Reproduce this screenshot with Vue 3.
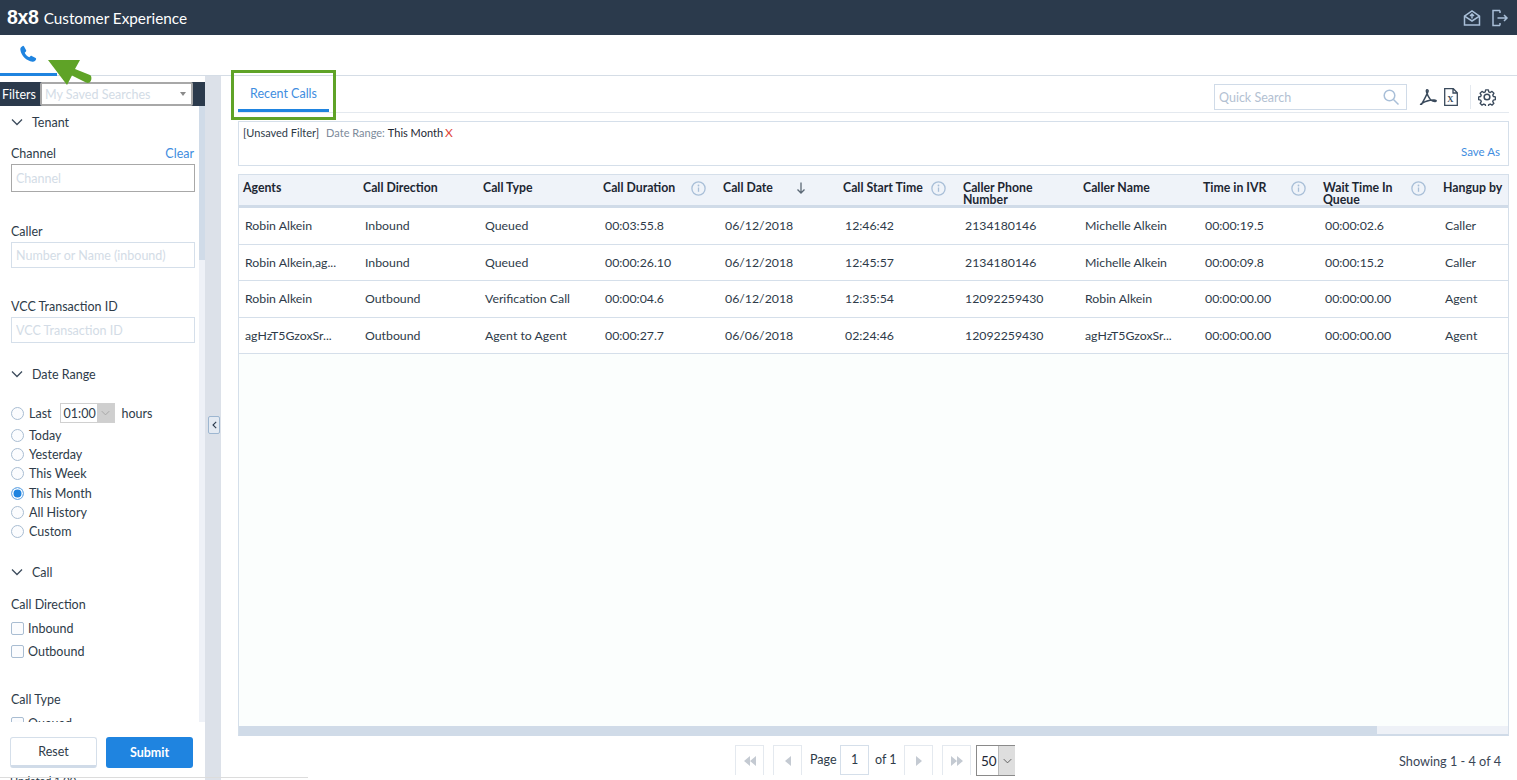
<template>
  <div class="page">
    <header class="topbar">
      <div class="brand"><span class="logo">8x8</span><span class="brand-name">Customer Experience</span></div>
      <div class="top-icons">
        <svg width="18" height="18" viewBox="0 0 18 18" fill="none" stroke="#a9bfd8" stroke-width="1.5">
          <path d="M1.500 7.200 9 2l7.500 5.200V16h-15z" />
          <path d="M1.500 7.200 9 12l7.500-4.800" />
          <path d="M9 9.500V5.200M7 7l2-2 2 2" />
        </svg>
        <svg width="18" height="18" viewBox="0 0 18 18" fill="none" stroke="#a9bfd8" stroke-width="1.5">
          <path d="M9 1.500H2v15h7M9 1.500V4M9 16.500V14" />
          <path d="M6.500 9H16M13 6l3 3-3 3" />
        </svg>
      </div>
    </header>

    <nav class="modulebar">
      <div class="module-tab">
        <svg width="18" height="18" viewBox="0 0 24 24" fill="#1f84e0">
          <path d="M6.600 1.800 9.500 7c.3.500.2 1.100-.2 1.500L7.600 10.300c1.300 2.600 3.500 4.800 6.100 6.100l1.800-1.700c.4-.4 1-.5 1.500-.2l5.200 2.900c.6.300.8 1 .6 1.600-.7 2.200-2.600 3.500-4.800 3.200C10 21.100 2.900 14 1.800 6.200 1.500 4 2.800 2.100 5 1.200c.6-.2 1.300 0 1.600.6z" />
        </svg>
      </div>
    </nav>

    <div class="body">
      <aside class="sidebar">
        <div class="filter-col">
          <div class="filters-head">
            <span class="filters-label">Filters</span>
            <div class="saved-select"><span>My Saved Searches</span><i class="caret"></i></div>
          </div>
          <div class="filter-wrap">
            <div class="filter-scroll">
              <div class="section-title tenant"><svg class="chev" viewBox="0 0 12 8"><path d="M1 1.500 6 6.500l5-5" /></svg>Tenant</div>
              <div class="field-label channel"><span>Channel</span><a>Clear</a></div>
              <input class="text-input dark" placeholder="Channel" />
              <div class="field-label caller"><span>Caller</span></div>
              <input class="text-input" placeholder="Number or Name (inbound)" />
              <div class="field-label vcc"><span>VCC Transaction ID</span></div>
              <input class="text-input" placeholder="VCC Transaction ID" />
              <div class="section-title date"><svg class="chev" viewBox="0 0 12 8"><path d="M1 1.500 6 6.500l5-5" /></svg>Date Range</div>
              <div class="radio-row last">
                <i class="radio"></i><span>Last</span>
                <div class="hours"><span>01:00</span><b><svg width="9" height="6" viewBox="0 0 12 8"><path d="M1 1.500 6 6.500l5-5" fill="none" stroke="#a8a8a8" stroke-width="1.300" /></svg></b></div>
                <span class="hours-label">hours</span>
              </div>
              <div v-for="r in ranges" :key="r" class="radio-row">
                <i class="radio" :class="{ on: r === 'This Month' }"></i><span>{{ r }}</span>
              </div>
              <div class="section-title call"><svg class="chev" viewBox="0 0 12 8"><path d="M1 1.500 6 6.500l5-5" /></svg>Call</div>
              <div class="field-label direction"><span>Call Direction</span></div>
              <div class="check-row"><i class="check"></i><span>Inbound</span></div>
              <div class="check-row"><i class="check"></i><span>Outbound</span></div>
              <div class="field-label calltype"><span>Call Type</span></div>
              <div class="check-row"><i class="check"></i><span>Queued</span></div>
            </div>
            <div class="side-track"><div class="side-thumb"></div></div>
          </div>
          <div class="filter-actions">
            <button class="btn reset">Reset</button>
            <button class="btn submit">Submit</button>
          </div>
          <div class="clipped">Updated 1.00</div>
        </div>
        <div class="splitter">
          <div class="collapse"><svg width="5" height="8" viewBox="0 0 5 8"><path d="M4.200.8 1 4l3.200 3.200" fill="none" stroke="#2c3b4d" stroke-width="1.100" /></svg></div>
        </div>
      </aside>

      <main class="main">
        <div class="tabs-row">
          <div class="tab">Recent Calls</div>
          <div class="tools">
            <div class="search">
              <span>Quick Search</span>
              <svg width="16" height="16" viewBox="0 0 16 16" fill="none" stroke="#a9bfd8" stroke-width="1.500"><circle cx="6.500" cy="6.500" r="5.300" /><path d="m10.500 10.500 5 5" /></svg>
            </div>
            <svg class="pdf" width="18" height="16" viewBox="0 0 18 16" fill="none" stroke="#3a4a5c" stroke-width="1.500">
              <path d="M8 .8c-1 0-.9 2 1 6 1.200 2.500 3 4.800 4.800 5.300 2 .6 3.500.4 3.400-.4-.1-.9-3-1.100-6.200-.4-3.500.8-7.500 2.500-9 3.700-.8.700-.3 1.100.4.500C4 13 8.600 4 9 2.500 9.300 1.300 8.800.8 8 .8z" />
            </svg>
            <svg class="xls" width="14" height="18" viewBox="0 0 14 18" fill="none" stroke="#3a4a5c" stroke-width="1.300">
              <path d="M.7.700h8.600l4 4v12.600H.7zM9 .7v4.300h4.300" />
              <text x="3.300" y="14" font-size="8.500" font-weight="700" fill="#3a4a5c" stroke="none" font-family="Liberation Serif, serif">X</text>
            </svg>
            <i class="tool-sep"></i>
            <svg class="gear" width="18" height="18" viewBox="0 0 24 24" fill="none" stroke="#3a4a5c" stroke-width="2" stroke-linejoin="round">
              <path d="M10 1.500h4l.6 3 2.200.9 2.600-1.700 2.800 2.800-1.700 2.600.9 2.200 3 .6v4l-3 .6-.9 2.200 1.700 2.600-2.800 2.800-2.600-1.700-2.200.9-.6 3h-4l-.6-3-2.200-.9-2.600 1.700-2.800-2.800 1.700-2.600-.9-2.200-3-.6v-4l3-.6.9-2.200L1.800 6.500l2.800-2.800 2.600 1.700 2.200-.9z" transform="translate(1.200 1.200) scale(.9)" />
              <circle cx="12" cy="12" r="3.800" />
            </svg>
          </div>
        </div>

        <section class="filter-summary">
          <div class="summary-line">
            <span class="unsaved">[Unsaved Filter]</span>
            <span class="range-key">Date Range:</span>
            <span class="range-val">This Month</span>
            <span class="range-x">X</span>
          </div>
          <a class="save-as">Save As</a>
        </section>

        <section class="grid">
          <div class="grid-inner">
            <div class="grid-head">
              <div v-for="c in columns" :key="c.label" class="th">
                <span class="th-label">{{ c.label }}</span>
                <svg v-if="c.info" class="info" width="15" height="15" viewBox="0 0 15 15" fill="none">
                  <circle cx="7.500" cy="7.500" r="6.600" stroke="#a9bfd8" stroke-width="1.300" />
                  <path d="M7.500 6.500v4.300" stroke="#a9bfd8" stroke-width="1.300" />
                  <circle cx="7.500" cy="4.500" r=".9" fill="#a9bfd8" />
                </svg>
                <svg v-if="c.sort" class="sort" width="10" height="12" viewBox="0 0 10 12" fill="none" stroke="#5b6875" stroke-width="1.300"><path d="M5 .5v10.500M1.500 7.500 5 11l3.500-3.500" /></svg>
              </div>
            </div>
            <div v-for="(row, i) in rows" :key="i" class="tr">
              <div v-for="(v, j) in row" :key="j" class="td">{{ v }}</div>
            </div>
            <div class="grid-fill"></div>
          </div>
          <div class="hscroll"><div class="hthumb"></div></div>
        </section>

        <footer class="pager">
          <div class="pager-center">
            <button class="pg"><svg width="12" height="10" viewBox="0 0 12 10" fill="#c4cad2"><path d="M6 0v10L0 5zM12 0v10L6 5z" /></svg></button>
            <button class="pg second"><svg width="6" height="10" viewBox="0 0 6 10" fill="#c4cad2"><path d="M6 0v10L0 5z" /></svg></button>
            <span class="pg-text">Page</span>
            <span class="pg-num">1</span>
            <span class="pg-text of">of 1</span>
            <button class="pg"><svg width="6" height="10" viewBox="0 0 6 10" fill="#c4cad2"><path d="M0 0v10l6-5z" /></svg></button>
            <button class="pg second"><svg width="12" height="10" viewBox="0 0 12 10" fill="#c4cad2"><path d="M0 0v10l6-5zM6 0v10l6-5z" /></svg></button>
            <div class="size-select"><span>50</span><b><svg width="9" height="6" viewBox="0 0 12 8"><path d="M1 1.500 6 6.500l5-5" fill="none" stroke="#555" stroke-width="1.200" /></svg></b></div>
          </div>
          <span class="showing">Showing 1 - 4 of 4</span>
        </footer>
      </main>
    </div>

    <svg class="arrow-note" width="50" height="30" viewBox="0 0 50 30">
      <path d="M0 0h32l-5 9 15 6c2 .8 2 6-.5 7.500-1 .5-2.500.5-3.500 0L24 15.500 19 25z" fill="#5fa327" />
    </svg>
    <div class="box-note"></div>
    <div class="page-edge"></div>
  </div>
</template>

<script setup>
const ranges = ['Today', 'Yesterday', 'This Week', 'This Month', 'All History', 'Custom']

const columns = [
  { label: 'Agents' },
  { label: 'Call Direction' },
  { label: 'Call Type' },
  { label: 'Call Duration', info: true },
  { label: 'Call Date', sort: true },
  { label: 'Call Start Time', info: true },
  { label: 'Caller Phone Number' },
  { label: 'Caller Name' },
  { label: 'Time in IVR', info: true },
  { label: 'Wait Time In Queue', info: true },
  { label: 'Hangup by' }
]

const rows = [
  ['Robin Alkein', 'Inbound', 'Queued', '00:03:55.8', '06/12/2018', '12:46:42', '2134180146', 'Michelle Alkein', '00:00:19.5', '00:00:02.6', 'Caller'],
  ['Robin Alkein,ag...', 'Inbound', 'Queued', '00:00:26.10', '06/12/2018', '12:45:57', '2134180146', 'Michelle Alkein', '00:00:09.8', '00:00:15.2', 'Caller'],
  ['Robin Alkein', 'Outbound', 'Verification Call', '00:00:04.6', '06/12/2018', '12:35:54', '12092259430', 'Robin Alkein', '00:00:00.00', '00:00:00.00', 'Agent'],
  ['agHzT5GzoxSr...', 'Outbound', 'Agent to Agent', '00:00:27.7', '06/06/2018', '02:24:46', '12092259430', 'agHzT5GzoxSr...', '00:00:00.00', '00:00:00.00', 'Agent']
]
</script>

<style>
html, body {
  margin: 0;
  height: 100%;
  overflow: hidden;
  background: #fff;
}
</style>

<style scoped>
.page {
  position: relative;
  width: 1517px;
  height: 780px;
  overflow: hidden;
  display: flex;
  flex-direction: column;
  font-family: Lato, "Noto Sans", sans-serif;
  font-size: 12.500px;
  color: #2e3b49;
}

.topbar {
  height: 35px;
  flex: none;
  background: #2b3a4c;
  display: flex;
  align-items: center;
  justify-content: space-between;
  padding: 0 8px 0 7px;
  color: #fff;
}
.brand { display: flex; align-items: baseline; gap: 5px; }
.logo {
  font-family: "Liberation Sans", sans-serif;
  font-size: 19.500px;
  font-weight: 700;
  letter-spacing: -0.3px;
}
.brand-name { font-size: 15.300px; }
.top-icons { display: flex; gap: 10px; align-items: center; }

.modulebar {
  height: 41px;
  flex: none;
  box-sizing: border-box;
  border-bottom: 1px solid #d5dde6;
  background: #fff;
}
.module-tab {
  width: 57px;
  height: 41px;
  box-sizing: border-box;
  border-bottom: 3px solid #1f84e0;
  padding: 10px 0 0 19px;
}

.body { flex: 1; display: flex; min-height: 0; }

.sidebar { width: 221px; flex: none; display: flex; padding-top: 6px; box-sizing: border-box; }
.filter-col { width: 205px; display: flex; flex-direction: column; position: relative; }
.filters-head {
  height: 24px;
  flex: none;
  background: #2b3a4c;
  display: flex;
  align-items: center;
  padding-left: 2px;
  color: #fff;
}
.filters-label { width: 38px; }
.saved-select {
  width: 153px;
  height: 24px;
  box-sizing: border-box;
  border: 2px solid #a8a8a8;
  border-radius: 2px;
  background: #fff;
  display: flex;
  align-items: center;
  justify-content: space-between;
  padding: 0 5px 0 3px;
  color: #d3dce6;
}
.caret {
  border-left: 3.500px solid transparent;
  border-right: 3.500px solid transparent;
  border-top: 4px solid #8a8a8a;
}

.filter-wrap { flex: 1; min-height: 0; display: flex; overflow: hidden; }
.filter-scroll { width: 199px; padding-left: 11px; box-sizing: border-box; }
.side-track { width: 6px; background: #eef1f7; }
.side-thumb { height: 154px; background: #d0dbe8; }

.section-title {
  display: flex;
  align-items: center;
  height: 16px;
  color: #2e3b49;
}
.chev { width: 12px; height: 8px; margin-right: 9px; fill: none; stroke: #3d4c5d; stroke-width: 1.300; }
.section-title.tenant { margin-top: 8px; }
.section-title.date { margin-top: 23px; }
.section-title.call { margin-top: 23px; }

.field-label {
  display: flex;
  justify-content: space-between;
  width: 183px;
  height: 16px;
  line-height: 16px;
}
.field-label a { color: #3f8de0; }
.field-label.channel { margin-top: 16px; margin-bottom: 2px; }
.field-label.caller { margin-top: 32px; margin-bottom: 2px; }
.field-label.vcc { margin-top: 31px; margin-bottom: 2px; }
.field-label.direction { margin-top: 17px; margin-bottom: 4px; }
.field-label.calltype { margin-top: 29px; margin-bottom: 4px; }

.text-input {
  display: block;
  width: 184px;
  height: 26px;
  box-sizing: border-box;
  border: 1px solid #d5dfea;
  padding: 0 4px;
  font: inherit;
  outline: none;
  background: #fff;
}
.text-input.dark { height: 28px; border-color: #a8a8a8; }
.text-input::placeholder { color: #d3dce6; opacity: 1; }

.radio-row { display: flex; align-items: center; height: 19.200px; }
.radio-row.last { height: 20px; margin-top: 21px; margin-bottom: 3px; }
.radio {
  width: 13px;
  height: 13px;
  box-sizing: border-box;
  border: 1px solid #a9bdd2;
  border-radius: 50%;
  margin-right: 5px;
  background: #fbfcfe;
  flex: none;
}
.radio.on { background: #1f84e0; box-shadow: inset 0 0 0 1.500px #fff; border-color: #7db2e6; }
.hours {
  margin-left: 8px;
  width: 55px;
  height: 20px;
  box-sizing: border-box;
  border: 1px solid #d0d0d0;
  display: flex;
  align-items: center;
  padding-left: 3px;
  justify-content: space-between;
}
.hours b {
  width: 17px;
  height: 18px;
  background: #cfcfcf;
  display: flex;
  align-items: center;
  justify-content: center;
}
.hours-label { margin-left: 7px; }

.check-row { display: flex; align-items: center; height: 23px; }
.check {
  width: 13px;
  height: 13px;
  box-sizing: border-box;
  border: 1px solid #a9bdd2;
  border-radius: 2px;
  background: #fbfcfe;
  margin-right: 4px;
}

.filter-actions {
  height: 53px;
  flex: none;
  padding: 15px 12px 0 10px;
  box-sizing: border-box;
  display: flex;
  gap: 9px;
  background: #fff;
}
.btn {
  width: 87px;
  height: 31px;
  border-radius: 3px;
  font: inherit;
  font-weight: 700;
}
.btn.reset { background: #fff; color: #2e3b49; border: 1px solid #d5dfea; border-bottom: 3px solid #d0dbe8; font-weight: 400; }
.btn.submit { background: #1f84e0; color: #fff; border: none; }
.clipped { height: 5px; padding-left: 10px; line-height: 12px; overflow: hidden; font-size: 11px; }

.splitter {
  width: 16px;
  background: #dce1e9;
  position: relative;
  margin-top: -6px;
}
.collapse {
  position: absolute;
  left: 3px;
  top: 340px;
  width: 12px;
  height: 18px;
  box-sizing: border-box;
  background: #e4eaf2;
  border: 1px solid #9db6d0;
  border-radius: 2px;
  display: flex;
  align-items: center;
  justify-content: center;
}

.main {
  width: 1271px;
  margin-left: 17px;
  flex: none;
  display: flex;
  flex-direction: column;
}

.tabs-row {
  height: 37px;
  flex: none;
  box-sizing: border-box;
  border-bottom: 1px solid #e4e9ef;
  display: flex;
  justify-content: space-between;
}
.tab {
  width: 91px;
  height: 36px;
  box-sizing: border-box;
  border-bottom: 3px solid #1f84e0;
  padding-top: 9px;
  line-height: 18px;
  text-align: center;
  color: #3f8de0;
  margin-bottom: -1px;
}
.tools { display: flex; align-items: center; padding-top: 6px; height: 30px; padding-right: 13px; }
.search {
  width: 193px;
  height: 26px;
  box-sizing: border-box;
  border: 1px solid #d0dbe8;
  display: flex;
  align-items: center;
  justify-content: space-between;
  padding: 0 7px 0 4px;
  color: #b3c1d2;
  margin-right: 12px;
}
.xls { margin-left: 7px; }
.tool-sep { width: 1px; height: 24px; background: #e4e9ef; margin: 0 7px 0 12px; }

.filter-summary {
  margin-top: 8px;
  height: 45px;
  flex: none;
  box-sizing: border-box;
  border: 1px solid #d5dfea;
  padding: 3px 8px 0 4px;
  position: relative;
  font-size: 11px;
}
.summary-line { display: flex; align-items: center; line-height: 16px; }
.unsaved { margin-right: 7px; }
.range-key { color: #7d8b9b; margin-right: 3px; }
.range-val { color: #1d2733; margin-right: 2px; }
.range-x { color: #e0453a; font-size: 12px; }
.save-as { position: absolute; right: 8px; bottom: 7px; color: #3f8de0; font-size: 11.500px; }

.grid {
  margin-top: 8px;
  height: 562px;
  flex: none;
  box-sizing: border-box;
  border-left: 1px solid #d5dfea;
  border-right: 1px solid #d5dfea;
  border-bottom: 2px solid #d0dbe8;
  border-top: 1px solid #d5dfea;
  display: flex;
  flex-direction: column;
  overflow: hidden;
  background: #fdfefe;
}
.grid-inner { flex: 1; min-height: 0; overflow: hidden; }
.grid-head, .tr {
  display: grid;
  grid-template-columns: repeat(11, 120px);
  width: 1320px;
}
.grid-head {
  height: 30px;
  background: #eff3f9;
  border-bottom: 3px solid #d0dbe8;
  box-sizing: content-box;
}
.th {
  display: flex;
  padding: 7px 0 0 4px;
  font-weight: 700;
  font-size: 12.300px;
  line-height: 12px;
  color: #1d2733;
  box-sizing: border-box;
  position: relative;
}
.th-label { max-width: 86px; }
.info { position: absolute; left: 92px; top: 6px; }
.sort { position: absolute; left: 77px; top: 7px; }
.tr {
  height: 36.500px;
  box-sizing: border-box;
  border-bottom: 1px solid #d5dfea;
  background: #fff;
  align-items: center;
  font-size: 12.300px;
}
.td { padding-left: 6px; white-space: nowrap; }
.grid-fill { height: 100%; background: #fbfefd; }
.hscroll { height: 8px; flex: none; background: #eef1f7; }
.hthumb { width: 1138px; height: 100%; background: #d0dbe8; }

.pager {
  height: 40px;
  flex: none;
  position: relative;
  display: flex;
  justify-content: flex-end;
  align-items: center;
  padding-top: 9px;
  box-sizing: border-box;
  padding-right: 8px;
}
.pager-center {
  position: absolute;
  left: 497px;
  top: 9px;
  display: flex;
  align-items: flex-start;
}
.pg {
  width: 29px;
  height: 30px;
  box-sizing: border-box;
  border: 1px solid #e4e9ef;
  border-bottom: none;
  background: #fff;
  display: flex;
  align-items: center;
  justify-content: center;
  padding: 0;
}
.pg.second { margin-left: 9px; }
.pg-text { line-height: 30px; margin-left: 8px; width: 30px; }
.pg-num {
  width: 29px;
  height: 30px;
  box-sizing: border-box;
  border: 1px solid #d5dfea;
  line-height: 28px;
  text-align: center;
}
.of { margin-left: 6px; width: 29px; }
.size-select {
  margin-left: 5px;
  width: 39px;
  height: 31px;
  box-sizing: border-box;
  border: 1px solid #8a8a8a;
  border-right: 0;
  display: flex;
  align-items: center;
  justify-content: space-between;
  padding-left: 4px;
  color: #1d2733;
  font-size: 13.500px;
}
.size-select b {
  width: 16px;
  height: 100%;
  background: #dedede;
  display: flex;
  align-items: center;
  justify-content: center;
  border-left: 1px solid #bbb;
}
.showing { color: #3a4656; font-size: 12.700px; }

.arrow-note { position: absolute; left: 48px; top: 60px; }
.box-note {
  position: absolute;
  left: 231px;
  top: 70px;
  width: 105px;
  height: 50px;
  box-sizing: border-box;
  border: 3px solid #5fa327;
}
.page-edge {
  position: absolute;
  left: 0;
  bottom: 2px;
  width: 308px;
  height: 1px;
  background: #dcdcdc;
}
</style>
